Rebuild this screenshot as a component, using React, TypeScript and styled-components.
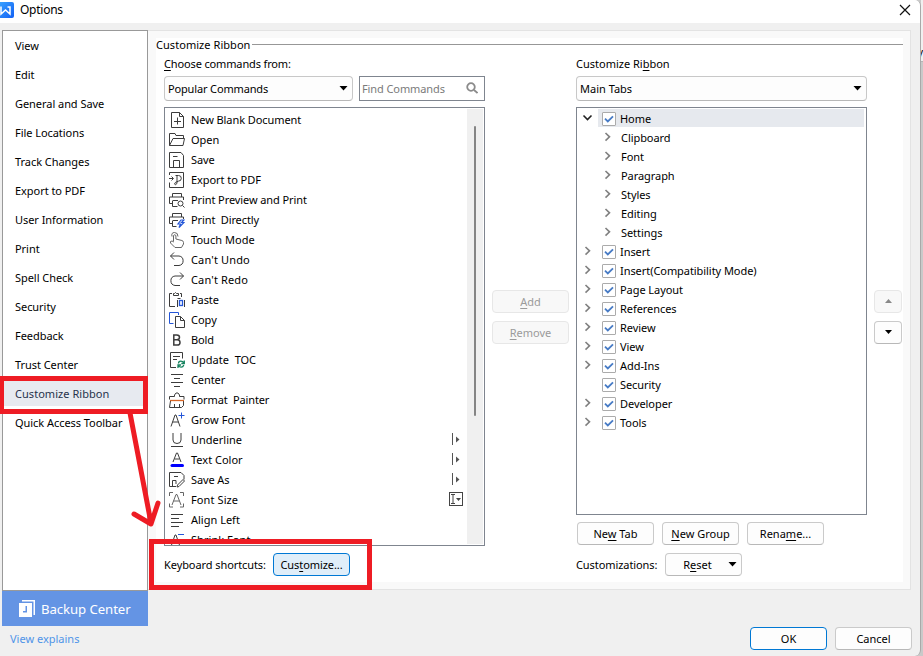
import React from "react";
import styled, { createGlobalStyle, css } from "styled-components";

const GlobalStyle = createGlobalStyle`
  * { box-sizing: border-box; }
  html, body { margin: 0; width: 923px; height: 656px; overflow: hidden; }
  body {
    background: #c9c9c9;
    font-family: "Noto Sans", "Open Sans", sans-serif;
    font-size: 11px;
    line-height: 16px;
    color: #000;
  }
  u { text-decoration: underline; text-underline-offset: 2px; text-decoration-thickness: 1px; text-decoration-skip-ink: none; }
`;

const Screen = styled.div`
  position: relative;
  display: flex;
  width: 923px;
  height: 656px;
  overflow: hidden;
`;

const Dialog = styled.div`
  display: flex;
  flex-direction: column;
  width: 921px;
  height: 656px;
  background: #f0f0f0;
  border-right: 1px solid #a9a9a9;
  border-radius: 0 6px 6px 0;
  overflow: hidden;
`;

const Behind = styled.div`
  width: 2px;
  height: 62px;
  background: #f0f0f0;
  border-bottom: 1px solid #b5b5b5;
  padding-top: 44px;
  direction: rtl;
  overflow: hidden;
`;

const TitleBar = styled.header`
  display: flex;
  align-items: center;
  height: 23px;
  padding: 0 9px 3px 0;
  background: #fff;
  svg:last-child { margin-left: auto; }
`;

const Title = styled.h1`
  margin: 0 0 0 6px;
  font-size: 12px;
  font-weight: 400;
  letter-spacing: -0.25px;
`;

const Body = styled.div`
  display: flex;
  height: 603px;
  padding: 7px 0 0 2px;
`;

const Side = styled.aside`
  width: 146px;
`;

const Nav = styled.nav`
  display: flex;
  flex-direction: column;
  height: 561px;
  padding-top: 1px;
  border: 1px solid #999;
  background: #fff;
`;

const NavItem = styled.a<{ $active?: boolean }>`
  display: flex;
  align-items: center;
  height: 26px;
  margin: 0 0 3px 1px;
  padding: 2px 0 0 11px;
  white-space: nowrap;
  letter-spacing: ${(p) => (p.$active ? 0.04 : -0.05)}px;
  color: ${(p) => (p.$active ? "#26324b" : "#000")};
  background: ${(p) => (p.$active ? "#e7eaf0" : "transparent")};
`;

const Backup = styled.button`
  display: flex;
  align-items: center;
  width: 146px;
  height: 35px;
  padding: 0 0 0 17px;
  gap: 6px;
  border: 0;
  background: #6494e4;
  color: #fff;
  font: 13.2px/20px "Noto Sans", sans-serif;
  letter-spacing: -0.08px;
  white-space: nowrap;
`;

const Explains = styled.a`
  display: block;
  margin: 5px 0 0 8px;
  color: #4f94e8;
`;

const Page = styled.main`
  width: 763px;
  height: 560px;
  padding: 7px;
  border: 1px solid #e3e3e3;
  border-left: 0;
  background: #f9f9f9;
`;

const Group = styled.section`
  width: 747px;
  height: 544px;
  margin-left: 1px;
  background: #fff;
`;

const GroupTitle = styled.div`
  display: flex;
  align-items: center;
  height: 14px;
  gap: 2px;
  white-space: nowrap;
  letter-spacing: 0.05px;
  &::after { content: ""; flex: 1; height: 1px; margin-top: -1px; background: #979797; }
`;

const Columns = styled.div`
  display: grid;
  grid-template-columns: 321px 91px 291px 36px;
  padding-left: 8px;
`;

const Column = styled.div`
  display: flex;
  flex-direction: column;
`;

const FieldLabel = styled.label<{ $ls?: number }>`
  height: 24px;
  padding-top: 4px;
  letter-spacing: ${(p) => p.$ls ?? 0}px;
`;

const FieldRow = styled.div`
  display: flex;
  gap: 6px;
  height: 25px;
`;

const Combo = styled.div<{ $w: number; $ls?: number }>`
  display: flex;
  align-items: center;
  justify-content: space-between;
  width: ${(p) => p.$w}px;
  height: 25px;
  padding: 0 4px 0 3px;
  border: 1px solid #c8c8c8;
  border-bottom-color: #b8b8b8;
  border-radius: 4px;
  background: #fdfdfd;
  letter-spacing: ${(p) => p.$ls ?? 0}px;
  svg { margin-top: -2px; }
`;

const Search = styled.div`
  display: flex;
  align-items: center;
  justify-content: space-between;
  width: 126px;
  height: 25px;
  padding: 0 6px 0 2px;
  border: 1px solid #7f858f;
  color: #7b7b7b;
  letter-spacing: -0.1px;
  svg { margin-top: -1px; }
`;

const ListBox = styled.div<{ $h: number }>`
  display: flex;
  height: ${(p) => p.$h}px;
  margin-top: 6px;
  border: 1px solid #7f858f;
  background: #fff;
  overflow: hidden;
`;

const Commands = styled.div`
  flex: 1;
  padding: 2px 0 0 4px;
`;

const Command = styled.div<{ $ls: number }>`
  display: flex;
  align-items: center;
  height: 20px;
  gap: 6px;
  padding-right: 4px;
  white-space: pre;
  letter-spacing: ${(p) => p.$ls}px;
  svg { flex: none; margin-top: -1px; }
  svg + span + svg { margin-left: auto; margin-top: -2px; }
`;

const Scroll = styled.div`
  width: 16px;
  height: 435px;
  margin: 1px 1px 0 0;
  padding: 17px 0 0 7px;
  background: #f0f0f0;
`;

const Thumb = styled.div`
  width: 2px;
  height: 290px;
  border-radius: 1px;
  background: #858585;
`;

const Tree = styled.div`
  flex: 1;
  padding: 1px 2px 0 3px;
`;

const TreeRow = styled.div`
  display: flex;
  height: 19px;
`;

const TreeToggle = styled.span`
  display: grid;
  place-items: center;
  width: 14px;
  height: 18px;
`;

const TreeLabel = styled.div<{ $selected?: boolean; $child?: boolean }>`
  display: flex;
  flex: 1;
  align-items: center;
  height: 18px;
  margin-left: ${(p) => (p.$child ? 0 : 4)}px;
  padding: 1px 0 0 ${(p) => (p.$child ? 7 : 4)}px;
  gap: 4px;
  letter-spacing: -0.06px;
  background: ${(p) => (p.$selected ? "#e6e9ee" : "transparent")};
`;

const ChildIndent = styled.span`
  width: 20px;
`;

const Check = styled.span`
  display: grid;
  place-items: center;
  width: 14px;
  height: 14px;
  border: 1px solid #ababab;
  border-radius: 1px;
  background: #fff;
`;

const Button = styled.button<{ $kind?: "disabled" | "primary" | "focus"; $w?: number }>`
  display: flex;
  align-items: center;
  justify-content: center;
  flex: none;
  width: ${(p) => p.$w ?? 77}px;
  height: 23px;
  padding: 1px 0 0;
  border: 1px solid #cacaca;
  border-bottom-color: #b8b8b8;
  border-radius: 4px;
  background: #fdfdfd;
  color: #000;
  font: 11px/16px "Noto Sans", sans-serif;
  white-space: nowrap;
  svg { margin-top: -2px; }
  ${(p) => p.$kind === "disabled" && css`border-color: #e7e7e7; background: #f8f8f8; color: #9b9b9b;`}
  ${(p) => p.$kind === "primary" && css`border-color: #0078d4;`}
  ${(p) => p.$kind === "focus" && css`border-color: #0078d4; background: #e0eef9; letter-spacing: -0.08px;`}
`;

const ButtonStack = styled.div`
  display: flex;
  flex-direction: column;
  gap: 8px;
  padding: 238px 0 0 7px;
`;

const ButtonRow = styled.div<{ $top?: number; $left?: number }>`
  display: flex;
  align-items: center;
  gap: 8px;
  margin: ${(p) => p.$top ?? 7}px 0 0 ${(p) => p.$left ?? 0}px;
  white-space: nowrap;
`;

const ButtonCaption = styled.span<{ $w: number }>`
  width: ${(p) => p.$w}px;
  letter-spacing: -0.08px;
`;

const ResetText = styled.span`
  margin: 0 16px 0 13px;
`;

const Footer = styled.footer`
  display: flex;
  justify-content: flex-end;
  gap: 8px;
  padding: 1px 8px 0 0;
`;

const Annotation = styled.svg`
  position: absolute;
  inset: 0;
  pointer-events: none;
`;

const Caret = ({ up, small, color = "#000" }: { up?: boolean; small?: boolean; color?: string }) => (
  <svg width="9" height="6" viewBox="0 0 9 6" fill={color}>
    {up ? <path d="M1 5h7L4.5 1z" /> : small ? <path d="M1 1h7L4.5 5z" /> : <path d="M.5 1h8L4.5 5.4z" />}
  </svg>
);

const Chevron = ({ open }: { open?: boolean }) => (
  <svg width="11" height="10" viewBox="0 0 11 10" fill="none" stroke={open ? "#222" : "#808080"} strokeWidth="1.6">
    {open ? <path d="M1.5 2.500l4 4 4-4" /> : <path d="M3.500 1l4 3.800-4 3.800" />}
  </svg>
);

const blue = "#2456d8";
const glyphs: Record<string, React.ReactNode> = {
  new: <path d="M2.5.5h8l4 4v11h-12zM10.5.5v4h4M8.5 5.500v7M5 9.500h7" />,
  open: <path d="M.5 13.500v-12H6l1 2h7.500V6M.5 13.500L4 6.500h11.500L14 13.500z" />,
  save: <path d="M.5 .5H12L14.500 3.500v12H.5zM4.500 15V8.500h6V15M4 4.500h4.500" />,
  pdf: <path d="M.5 3V.5h14v15H.5v-5M0 6.500h4M2.500 4.500l2 2-2 2M6.500 3.500h3a2.800 2.800 0 010 5.600q-4 1-4 3 1 2 2.500-1V4" />,
  preview: <><path d="M3.500 5V1.500h9V5M3 11.500H.5V5h14v3M4 8.500h5M3.500 8.500v6h5" /><circle cx="11.500" cy="11.500" r="2.500" /><path d="M13.500 13.500l2 2" /></>,
  direct: <><path d="M3.500 5V1.500h9V5M3 11.500H.5V5h14v2M4 8.500h5M3.500 8.500v6h4" /><path stroke={blue} strokeWidth="1.200" d="M12 8l-3 4h2.500l-1.500 3.500 5-5h-2.500L15 8z" /></>,
  touch: <path stroke="#666" d="M3 4.500Q2 .5 5.500.5T9 4.500M4.500 9V3.500q1.200-1.500 2.400 0V7l6 1.500q1.600.5 1.600 2v1.500l-2 3.500H6L1.500 11V9.500l1.500-.5 2 1" />,
  undo: <path d="M5 .5L1.500 4 5 7.500M1.500 4H10a4.800 4.800 0 010 9.500H5" />,
  redo: <path d="M11 .5L14.500 4 11 7.500M14.500 4H6a4.800 4.800 0 000 9.500h5" />,
  paste: <><path d="M3 1.500H.5v13H6M12.500 5V1.500H11M4.500 3.500v-2h1L6.500.500l1 1h2v2zM8.500 6.500h3M8.500 8v7M15.500 8v7" /><rect x="10.500" y="8.500" width="3" height="5" stroke={blue} strokeWidth="1.300" /></>,
  copy: <><path stroke={blue} d="M4.500 11.500h-4V.5h9V3" /><path d="M6.500 4.500h5l4 4v7h-9zM11.500 4.500v4h4" /></>,
  bold: <path strokeWidth="1.500" d="M4.800 3h3q2.700 0 2.700 2.300T7.800 7.800h-3zm0 4.800h3.500q2.700 0 2.700 2.600t-2.700 2.600H4.800z" />,
  toc: <><path d="M7 15.500H1.500V.5h12v6M4 4.500h7M4 7.500h4" /><path stroke="#16835f" strokeWidth="1.300" d="M9.500 11.500c0-3 4-3 5.500-.5M15.300 8.500v3h-3M14.800 13c-1 2.800-4 2.800-5.500.5M9 16v-3h3" /></>,
  center: <path d="M2 2.500h12M5 6.500h6M2 10.500h12M5 14.500h6" />,
  painter: <><path d="M.5 7.500v-3h5V3L7 1h2l1.500 2v1.500h4.500v3M1.500 9L.5 15.500h12l2-2V9M5.500 15v-3M10.500 15v-3" /><path stroke="#d96624" strokeWidth="1.300" d="M1 8.500h14" /></>,
  grow: <><path d="M2 14.500L6 3h1l4 11.500M3.500 10h6" /><path stroke={blue} d="M12.500.5v6M9.500 3.500h6" /></>,
  underline: <path d="M4 1v7q0 3.500 4 3.500t4-3.500V1M2 14.500h12" />,
  color: <><path d="M4 10L7.500 1h1L12 10M5.500 7h5" /><path stroke="#0000ff" strokeWidth="3" strokeLinecap="round" d="M3 13.500h10.500" /></>,
  saveas: <path d="M7 14.500H.5V.5H12l3 3v4M7 12V8.500H3.500v6M5 4.500h4M8.500 13l5.500-5.500 1.500 1.500L10 14.500l-2 .5z" />,
  size: <path stroke="#666" d="M.5 4V.5H4M11 .5h3.500V4M.5 11.500V15H4M11 15h3.500v-3.500M3 13L7 2.500h1L12 13M4.500 9h6" />,
  left: <path d="M2 2.500h12M2 6.500h8M2 10.500h12M2 14.500h8" />,
  shrink: <><path d="M2 14.500L6 3h1l4 11.500M3.500 10h6" /><path stroke={blue} d="M9 2.500h6" /></>,
};

const Glyph = ({ name }: { name: string }) => (
  <svg width="16" height="16" viewBox="0 0 16 16" fill="none" stroke="#3c3c3c" strokeWidth="1">{glyphs[name]}</svg>
);

const SplitMark = () => (
  <svg width="13" height="14" viewBox="0 0 13 14" fill="#555"><path d="M2 1h1v12H2zM6 4.500l3.500 3L6 10.500z" /></svg>
);

const EditMark = () => (
  <svg width="15" height="14" viewBox="0 0 15 14" fill="none" stroke="#444">
    <rect x="1.500" y=".5" width="13" height="13" />
    <path d="M3 2.500h4M5 2.500v9M3 11.500h4" /><path fill="#444" stroke="none" d="M8 6h5l-2.500 3z" />
  </svg>
);

const nav = ["View", "Edit", "General and Save", "File Locations", "Track Changes", "Export to PDF", "User Information", "Print", "Spell Check", "Security", "Feedback", "Trust Center", "Customize Ribbon", "Quick Access Toolbar"];

const commands: { icon: string; label: string; ls?: number; mark?: "split" | "edit" }[] = [
  { icon: "new", label: "New Blank Document", ls: -0.08 },
  { icon: "open", label: "Open" },
  { icon: "save", label: "Save", ls: -0.1 },
  { icon: "pdf", label: "Export to PDF", ls: -0.06 },
  { icon: "preview", label: "Print Preview and Print", ls: -0.09 },
  { icon: "direct", label: "Print  Directly", ls: -0.11 },
  { icon: "touch", label: "Touch Mode", ls: 0.05 },
  { icon: "undo", label: "Can't Undo", ls: 0.15 },
  { icon: "redo", label: "Can't Redo", ls: 0.15 },
  { icon: "paste", label: "Paste", ls: -0.1 },
  { icon: "copy", label: "Copy" },
  { icon: "bold", label: "Bold", ls: -0.1 },
  { icon: "toc", label: "Update  TOC" },
  { icon: "center", label: "Center", ls: -0.08 },
  { icon: "painter", label: "Format  Painter", ls: -0.13 },
  { icon: "grow", label: "Grow Font", ls: 0.1 },
  { icon: "underline", label: "Underline", mark: "split" },
  { icon: "color", label: "Text Color", mark: "split" },
  { icon: "saveas", label: "Save As", ls: -0.1, mark: "split" },
  { icon: "size", label: "Font Size", ls: 0.1, mark: "edit" },
  { icon: "left", label: "Align Left" },
  { icon: "shrink", label: "Shrink Font", ls: 0.05 },
];

const homeGroups = ["Clipboard", "Font", "Paragraph", "Styles", "Editing", "Settings"];
const tabs = ["Insert", "Insert(Compatibility Mode)", "Page Layout", "References", "Review", "View", "Add-Ins", "Security", "Developer", "Tools"];

const TabRow = ({ label, home }: { label: string; home?: boolean }) => (
  <TreeRow>
    <TreeToggle>{label !== "Security" && <Chevron open={home} />}</TreeToggle>
    <TreeLabel $selected={home}>
      <Check>
        <svg width="10" height="10" viewBox="0 0 10 10" fill="none" stroke="#477bc5" strokeWidth="1.800"><path d="M1 4.700l2.800 2.800L9 2.300" /></svg>
      </Check>
      {label}
    </TreeLabel>
  </TreeRow>
);

export default function App() {
  return (
    <Screen>
      <GlobalStyle />
      <Dialog>
        <TitleBar>
          <svg width="14" height="16" viewBox="0 0 14 16">
            <defs><linearGradient id="brand" x2="1" y2="1"><stop stopColor="#37a0ff" /><stop offset="1" stopColor="#1260f4" /></linearGradient></defs>
            <path fill="url(#brand)" d="M0 0h12q2 0 2 2v12q0 2-2 2H0z" />
            <path d="M1 4.500v7.500l4.500-4 4.500 4V5H7.500" fill="none" stroke="#fff" strokeWidth="1.500" />
          </svg>
          <Title>Options</Title>
          <svg width="12" height="12" viewBox="0 0 12 12" stroke="#111" strokeWidth="1.200"><path d="M1 1l10 10M11 1L1 11" /></svg>
        </TitleBar>
        <Body>
          <Side>
            <Nav>{nav.map((n) => <NavItem key={n} $active={n === "Customize Ribbon"}>{n}</NavItem>)}</Nav>
            <Backup>
              <svg width="16" height="18" viewBox="0 0 16 18" fill="#fff">
                <path d="M3 0h13v15h-1.500V1.500H3z" /><path fillRule="evenodd" d="M0 3h13v14H0zm6.500 3v5H4v1.500h4V6z" />
              </svg>
              Backup Center
            </Backup>
            <Explains>View explains</Explains>
          </Side>
          <Page>
            <Group>
              <GroupTitle>Customize Ribbon</GroupTitle>
              <Columns>
                <Column>
                  <FieldLabel $ls={-0.14}><u>C</u>hoose commands from:</FieldLabel>
                  <FieldRow>
                    <Combo $w={189} $ls={-0.15}>Popular Commands<Caret /></Combo>
                    <Search>
                      Find Commands
                      <svg width="12" height="12" viewBox="0 0 12 12" fill="none" stroke="#8b8b8b" strokeWidth="1.800"><circle cx="5" cy="5" r="3.800" /><path d="M8 8l3.500 3" /></svg>
                    </Search>
                  </FieldRow>
                  <ListBox $h={439}>
                    <Commands>
                      {commands.map(({ icon, label, ls, mark }) => (
                        <Command key={label} $ls={ls ?? 0}>
                          <Glyph name={icon} /><span>{label}</span>
                          {mark === "split" && <SplitMark />}
                          {mark === "edit" && <EditMark />}
                        </Command>
                      ))}
                    </Commands>
                    <Scroll><Thumb /></Scroll>
                  </ListBox>
                  <ButtonRow>
                    <ButtonCaption $w={101}>Keyboard shortcuts:</ButtonCaption>
                    <Button $kind="focus"><span>Cus<u>t</u>omize...</span></Button>
                  </ButtonRow>
                </Column>
                <ButtonStack>
                  <Button $kind="disabled"><u>A</u>dd</Button>
                  <Button $kind="disabled"><u>R</u>emove</Button>
                </ButtonStack>
                <Column>
                  <FieldLabel>Customize Ri<u>b</u>bon</FieldLabel>
                  <FieldRow><Combo $w={291}>Main Tabs<Caret /></Combo></FieldRow>
                  <ListBox $h={408}>
                    <Tree>
                      <TabRow label="Home" home />
                      {homeGroups.map((g) => (
                        <TreeRow key={g}>
                          <ChildIndent />
                          <TreeToggle><Chevron /></TreeToggle>
                          <TreeLabel $child>{g}</TreeLabel>
                        </TreeRow>
                      ))}
                      {tabs.map((t) => <TabRow key={t} label={t} />)}
                    </Tree>
                  </ListBox>
                  <ButtonRow $left={1}>
                    <Button><span>Ne<u>w</u> Tab</span></Button>
                    <Button><span><u>N</u>ew Group</span></Button>
                    <Button><span>Rena<u>m</u>e...</span></Button>
                  </ButtonRow>
                  <ButtonRow $top={8}>
                    <ButtonCaption $w={81}>Customizations:</ButtonCaption>
                    <Button><ResetText>R<u>e</u>set</ResetText><Caret /></Button>
                  </ButtonRow>
                </Column>
                <ButtonStack>
                  <Button $kind="disabled" $w={28}><Caret up color="#888" /></Button>
                  <Button $w={28}><Caret small /></Button>
                </ButtonStack>
              </Columns>
            </Group>
          </Page>
        </Body>
        <Footer>
          <Button $kind="primary">OK</Button>
          <Button>Cancel</Button>
        </Footer>
      </Dialog>
      <Behind>y</Behind>
      <Annotation width="923" height="656" viewBox="0 0 923 656" fill="none" stroke="#ee1c24" strokeWidth="5">
        <rect x="1.500" y="378.500" width="144" height="33" />
        <rect x="151.500" y="541.500" width="218" height="46" />
        <path d="M130 413l21 110M134 514l17 10 7-21" strokeLinecap="round" strokeLinejoin="round" />
      </Annotation>
    </Screen>
  );
}
